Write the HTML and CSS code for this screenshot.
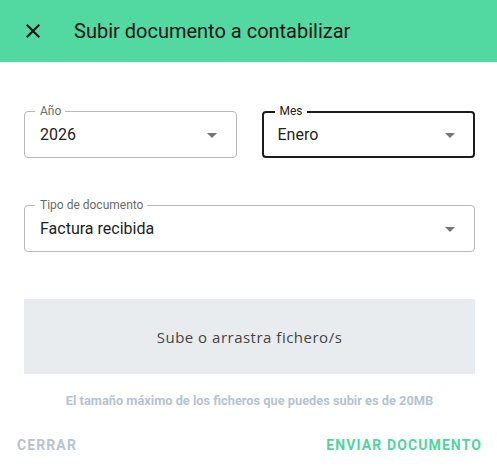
FILE: index.html
```html
<!DOCTYPE html>
<html lang="es">
<head>
    <meta charset="UTF-8">
    <meta name="viewport" content="width=device-width, initial-scale=1.0">
    <title>Subir documento a contabilizar</title>
    <link rel="stylesheet" href="styles.css">
</head>
<body>
    <div class="dialog">
        <!-- Header -->
        <div class="dialog-header">
            <button class="close-btn" aria-label="Cerrar">
                <svg viewBox="0 0 24 24" width="24" height="24"><path d="M19 6.41 17.59 5 12 10.59 6.41 5 5 6.41 10.59 12 5 17.59 6.41 19 12 13.41 17.59 19 19 17.59 13.41 12z"/></svg>
            </button>
            <h1>Subir documento a contabilizar</h1>
        </div>

        <div class="dialog-content">
            <!-- Year and month -->
            <div class="row">
                <div class="field">
                    <span class="field-label">Año</span>
                    <span class="field-value">2026</span>
                    <svg class="arrow" viewBox="0 0 24 24" width="24" height="24"><path d="M7 10l5 5 5-5z"/></svg>
                </div>
                <div class="field focused">
                    <span class="field-label">Mes</span>
                    <span class="field-value">Enero</span>
                    <svg class="arrow" viewBox="0 0 24 24" width="24" height="24"><path d="M7 10l5 5 5-5z"/></svg>
                </div>
            </div>

            <!-- Document type -->
            <div class="row">
                <div class="field">
                    <span class="field-label">Tipo de documento</span>
                    <span class="field-value">Factura recibida</span>
                    <svg class="arrow" viewBox="0 0 24 24" width="24" height="24"><path d="M7 10l5 5 5-5z"/></svg>
                </div>
            </div>

            <!-- Drop zone -->
            <div class="dropzone">Sube o arrastra fichero/s</div>
            <p class="note">El tamaño máximo de los ficheros que puedes subir es de 20MB</p>
        </div>

        <div class="dialog-actions">
            <button class="btn btn-close">Cerrar</button>
            <button class="btn btn-send">Enviar documento</button>
        </div>
    </div>
</body>
</html>
```

FILE: styles.css
```css
body {
    margin: 0;
    font-family: Roboto, "Liberation Sans", Arial, sans-serif;
    background: #fff;
}
.dialog {
    width: 497px;
}
.dialog-header {
    height: 62px;
    background: #52d9a1;
    display: flex;
    align-items: center;
    padding-left: 21px;
}
.close-btn {
    border: none;
    background: none;
    padding: 0;
    width: 24px;
    height: 24px;
    display: flex;
}
.close-btn svg {
    fill: #111;
}
.dialog-header h1 {
    margin: 0 0 0 29px;
    font-size: 20px;
    font-weight: 400;
    color: #161616;
}
.dialog-content {
    padding: 0 22px 0 24px;
}
.row {
    display: flex;
    gap: 25px;
    margin-top: 49px;
}
.row + .row {
    margin-top: 47px;
}
.field {
    position: relative;
    flex: 1;
    height: 47px;
    box-sizing: border-box;
    border: 1px solid #b9b9b9;
    border-radius: 4px;
    display: flex;
    align-items: center;
    padding-left: 15px;
}
.field.focused {
    border: 2px solid #1c1c1c;
    padding-left: 14px;
}
.field-label {
    position: absolute;
    top: -8px;
    left: 10px;
    padding: 0 4px 0 5px;
    background: #fff;
    font-size: 12px;
    color: #6b6b6b;
    line-height: 14px;
}
.field.focused .field-label {
    color: #1c1c1c;
    left: 11px;
    top: -9px;
}
.field-value {
    font-size: 16px;
    color: #222;
}
.arrow {
    position: absolute;
    right: 12px;
    top: 11px;
    fill: #757575;
}
.field.focused .arrow {
    right: 11px;
    top: 10px;
}
.dropzone {
    margin-top: 47px;
    height: 75px;
    background: #e9ecef;
    display: flex;
    align-items: center;
    justify-content: center;
    font-family: "Open Sans", sans-serif;
    font-size: 15px;
    color: #444;
    letter-spacing: 0.5px;
}
.note {
    margin: 19px 0 0;
    text-align: center;
    font-size: 12.8px;
    font-weight: 700;
    color: #b5c3d1;
}
.dialog-actions {
    display: flex;
    justify-content: space-between;
    padding: 19px 8px 0 10px;
}
.btn {
    border: none;
    background: none;
    padding: 10px 7px;
    font-family: Roboto, sans-serif;
    font-size: 14px;
    font-weight: 700;
    letter-spacing: 1.1px;
    text-transform: uppercase;
}
.btn-close {
    color: #b6c4d2;
}
.btn-send {
    color: #4fd69c;
}
```
